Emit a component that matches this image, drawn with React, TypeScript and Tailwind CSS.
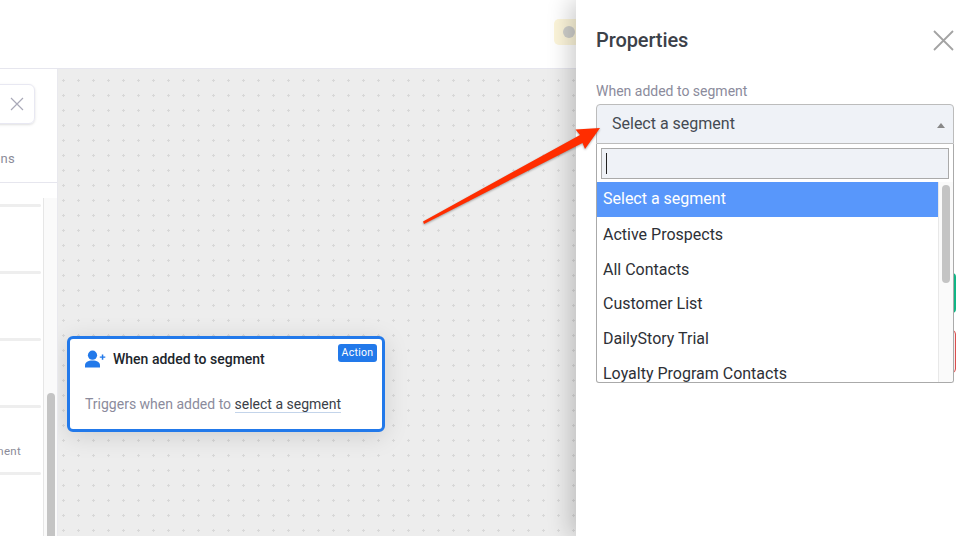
const segments = ['Active Prospects', 'All Contacts', 'Customer List', 'DailyStory Trial', 'Loyalty Program Contacts'];

// sidebar is slid off to the left, only the end of each row is visible
const Sidebar = () => (
  <div className="w-[58px] shrink-0 overflow-hidden bg-white border-r border-[#e9e9ee]">
    <div className="w-[300px] ml-[-242px]">
      <div className="h-[114px] border-b border-[#e6e6ee] pt-[15px] pr-[23px]">
        <div className="h-[40px] rounded-md border border-[#e8e8f2] flex items-center justify-end pr-[10px] shadow-sm">
          <svg width="14" height="14" viewBox="0 0 14 14" fill="none" stroke="#a9a9b8" strokeWidth="1.2">
            <path d="M1 1 13 13M13 1 1 13" />
          </svg>
        </div>
        <div className="mt-[25px] pr-[20px] text-right text-[13px] leading-[20px] text-[#8b8b99] tracking-[0.3px]">Actions</div>
      </div>
      <div className="flex h-[353px] pt-[15px]">
        <div className="w-[285px] shrink-0 bg-white flex flex-col">
          <div className="h-[3px] mt-[6px] mr-[2px] bg-[#eeeeee] rounded-full" />
          <div className="h-[64px]" />
          <div className="h-[3px] mr-[2px] bg-[#eeeeee] rounded-full" />
          <div className="h-[64px]" />
          <div className="h-[3px] mr-[2px] bg-[#eeeeee] rounded-full" />
          <div className="h-[64px]" />
          <div className="h-[3px] mr-[2px] bg-[#eeeeee] rounded-full" />
          <div className="h-[64px] pr-[22px] pb-[13px] flex items-end justify-end text-[11.5px] leading-[16px] text-[#8b8b99] tracking-[0.3px]">Added to segment</div>
          <div className="h-[3px] mr-[2px] bg-[#eeeeee] rounded-full" />
        </div>
        <div className="w-[15px] shrink-0 bg-[#fafafa] border-l border-[#e6e6e6] pl-[3px] pt-[195px]">
          <div className="w-[8px] h-[200px] bg-[#c4c4c4] rounded-t-[4px]" />
        </div>
      </div>
    </div>
  </div>
);

const NodeCard = () => (
  <div className="absolute left-[9px] top-[267px] w-[318px] h-[96px] bg-white rounded-[6px] border-[3px] border-[#2279ea] shadow-[0_4px_24px_rgba(0,0,0,0.13)]">
    <div className="absolute right-[5px] top-[5px] h-[18px] w-[39px] rounded-[3px] bg-[#2279ea] text-white text-[10.5px] leading-[18px] text-center tracking-[0.3px]">Action</div>
    <div className="flex items-center pl-[15px] pt-[10px] h-[30px]">
      <svg width="21" height="18" viewBox="0 0 21 18" fill="#2279ea" className="shrink-0">
        <circle cx="7.5" cy="5.2" r="4.6" />
        <path d="M0 17.5v-2.2C0 12.5 3 10.6 7.500 10.600s7.500 1.900 7.500 4.700v2.200z" />
        <path d="M16.800 4.400h1.500v2h2v1.400h-2v2h-1.500v-2h-2V6.400h2z" />
      </svg>
      <span className="ml-[7px] text-[14px] font-medium leading-[20px] text-[#20252b]">When added to segment</span>
    </div>
    <div className="pl-[15px] mt-[25px] text-[14px] leading-[20px] text-[#8b8b9c] whitespace-nowrap">
      Triggers when added to <span className="text-[#3a4048] border-b border-[#c3d4ea]">select a segment</span>
    </div>
  </div>
);

const Properties = () => (
  <div className="absolute right-0 top-0 bottom-0 w-[393px] bg-white shadow-[-6px_0_22px_rgba(0,0,0,0.2)] pl-[20px] pr-[15px] pt-[27px]">
    <div className="flex items-center justify-between h-[26px]">
      <h2 className="text-[20px] font-medium leading-[26px] tracking-[-0.1px] text-[#3c4149]">Properties</h2>
      <svg width="21" height="21" viewBox="0 0 21 21" fill="none" stroke="#a3a3a3" strokeWidth="1.8">
        <path d="M1 1 20 20M20 1 1 20" />
      </svg>
    </div>
    <div className="mt-[29px] text-[14px] leading-[18px] h-[18px] text-[#8b8b9c]">When added to segment</div>

    {/* buttons further down the panel, only their ends show past the dropdown */}
    <div className="absolute right-[13px] top-[273px] w-[60px] h-[40px] rounded-[4px] bg-[#10b585]" />
    <div className="absolute right-[13px] top-[330px] w-[60px] h-[43px] rounded-[4px] border border-[#d94f4f] bg-[#fbeaea]" />

    <div className="relative mt-[4px] w-[358px]">
      <div className="h-[40px] flex items-center justify-between pl-[15px] pr-[8px] bg-[#eff2f7] border border-[#bcbcbc] rounded-t-[4px]">
        <span className="text-[16px] text-[#444a52]">Select a segment</span>
        <span className="w-0 h-0 border-x-[4px] border-x-transparent border-b-[5px] border-b-[#888888] mt-[2px]" />
      </div>
      <div className="h-[239px] bg-white border border-t-0 border-[#aaaaaa] rounded-b-[3px] overflow-hidden">
        <div className="px-[4px] pt-[4px] pb-[3px]">
          <div className="h-[31px] bg-[#eff2f7] border border-[#aaaaaa] flex items-center pl-[4px]">
            <span className="w-px h-[21px] bg-[#222222]" />
          </div>
        </div>
        <div className="flex h-[200px]">
          <ul className="flex-1">
            <li className="h-[35px] pb-[1px] flex items-center pl-[6px] bg-[#5897fb] text-white text-[16px]">Select a segment</li>
            {segments.map((s) => (
              <li key={s} className="h-[34.700px] pt-[1px] flex items-center pl-[6px] text-[16px] text-[#2d3036] whitespace-nowrap">{s}</li>
            ))}
          </ul>
          <div className="w-[15px] shrink-0 bg-[#fafafa] border-l border-[#e8e8e8] pl-[3px] pt-[3px]">
            <div className="w-[8px] h-[98px] rounded-[4px] bg-[#c4c4c4]" />
          </div>
        </div>
      </div>
    </div>
  </div>
);

const Arrow = () => (
  <svg className="absolute left-[415px] top-[120px] drop-shadow-[0_1px_1px_rgba(0,0,0,0.35)]" width="195" height="112" viewBox="415 120 195 112">
    <path d="M423 221.500 580 135 575.500 129.500 600 128 585 149 582.500 143 424 224Z" fill="#ff2d00" />
  </svg>
);

export default function App() {
  return (
    <div className="relative w-[969px] h-[536px] overflow-hidden bg-white font-['Roboto',sans-serif]">
      <header className="h-[69px] border-b border-[#e6e6ee] bg-white relative">
        <div className="absolute left-[554px] top-[19px] w-[30px] h-[26px] rounded-[5px] bg-[#fcf5da] flex items-center pl-[9px]">
          <span className="w-[12px] h-[12px] rounded-full bg-[#cfcfcb]" />
        </div>
      </header>
      <div className="flex h-[467px]">
        <Sidebar />
        <div className="relative flex-1 bg-[#ededed] overflow-hidden">
          <svg className="absolute inset-0 w-full h-full">
            <defs>
              <pattern id="dots" x="4" y="10" width="15" height="15" patternUnits="userSpaceOnUse">
                <path d="M0 1.500h3M1.500 0v3" stroke="#d8d8d8" strokeWidth="1" />
              </pattern>
            </defs>
            <rect width="100%" height="100%" fill="url(#dots)" />
          </svg>
          <NodeCard />
        </div>
      </div>
      <Properties />
      <Arrow />
    </div>
  );
}
